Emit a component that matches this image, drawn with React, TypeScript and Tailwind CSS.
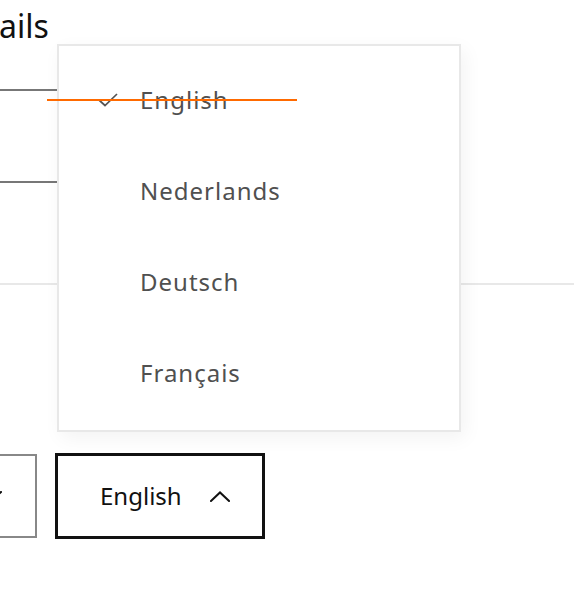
import React from 'react'

const languages = ['English', 'Nederlands', 'Deutsch', 'Français']

function Chevron({ up }: { up?: boolean }) {
  return (
    <svg width="20" height="11" viewBox="0 0 20 11" fill="none" className="shrink-0">
      <path
        d={up ? 'M1 10 L10 1.5 L19 10' : 'M1 1 L10 9.5 L19 1'}
        stroke="#111"
        strokeWidth="2"
        strokeLinecap="square"
      />
    </svg>
  )
}

function Check() {
  return (
    <svg width="20" height="14" viewBox="0 0 20 14" fill="none">
      <path d="M1 7 L7 12.5 L19 1" stroke="#555" strokeWidth="1.7" />
    </svg>
  )
}

export default function App() {
  const selected = 'English'

  return (
    <div className="relative h-[600px] w-[574px] overflow-hidden bg-white font-['Noto_Sans',sans-serif]">
      {/* form behind the open menu */}
      <div className="pt-[4px]">
        <h1 className="-ml-[1px] text-[32px] leading-[44px] text-[#111]">ails</h1>
        <div className="h-[43px] w-[300px] border-b-2 border-[#777]" />
        <div className="h-[92px] w-[300px] border-b-2 border-[#777]" />
        <div className="mt-[100px] border-t-2 border-[#e8e8e8]" />

        <div className="mt-[168px] -ml-[173px] flex items-center gap-[18px]">
          <button className="flex h-[84px] w-[210px] shrink-0 items-center justify-end border-2 border-[#888] pr-[33px] text-[24px] text-[#111]">
            <Chevron />
          </button>
          <button className="flex h-[86px] w-[210px] shrink-0 items-center justify-between border-[3px] border-[#111] pl-[42px] pr-[32px] text-[24px] text-[#111]">
            <span>{selected}</span>
            <Chevron up />
          </button>
        </div>
      </div>

      {/* language menu */}
      <div className="absolute left-[57px] top-[44px] h-[388px] w-[404px] border-2 border-[#e8e8e8] bg-white pt-[8px] shadow-[4px_6px_18px_rgba(0,0,0,0.05)]">
        {languages.map((lang) => (
          <div key={lang} className="flex h-[91px] items-center pl-[39px] text-[24px] tracking-[1px] text-[#505050]">
            <span className="flex w-[42px] items-center">{lang === selected && <Check />}</span>
            <span>{lang}</span>
          </div>
        ))}
      </div>

      {/* orange marker line */}
      <div className="absolute left-[47px] top-[99px] h-[2px] w-[250px] bg-[#ff6a00]" />
    </div>
  )
}
